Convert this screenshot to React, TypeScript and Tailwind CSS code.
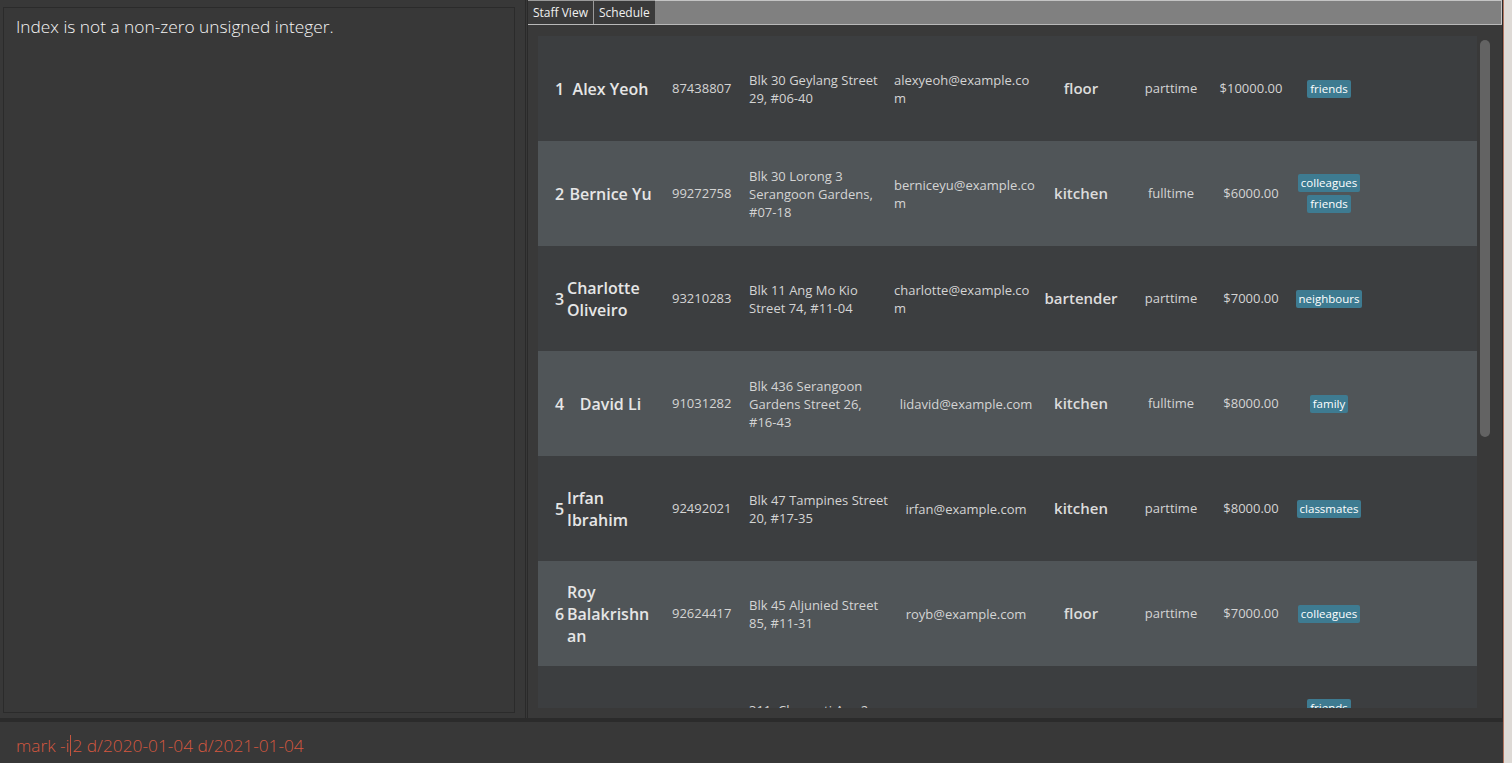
import React from "react"

interface Staff {
  name: string
  phone: string
  address: string
  email: string
  role: string
  type: string
  salary: string
  tags: string[]
}

const STAFF: Staff[] = [
  { name: "Alex Yeoh", phone: "87438807", address: "Blk 30 Geylang Street 29, #06-40", email: "alexyeoh@example.com", role: "floor", type: "parttime", salary: "$10000.00", tags: ["friends"] },
  { name: "Bernice Yu", phone: "99272758", address: "Blk 30 Lorong 3 Serangoon Gardens, #07-18", email: "berniceyu@example.com", role: "kitchen", type: "fulltime", salary: "$6000.00", tags: ["colleagues", "friends"] },
  { name: "Charlotte Oliveiro", phone: "93210283", address: "Blk 11 Ang Mo Kio Street 74, #11-04", email: "charlotte@example.com", role: "bartender", type: "parttime", salary: "$7000.00", tags: ["neighbours"] },
  { name: "David Li", phone: "91031282", address: "Blk 436 Serangoon Gardens Street 26, #16-43", email: "lidavid@example.com", role: "kitchen", type: "fulltime", salary: "$8000.00", tags: ["family"] },
  { name: "Irfan Ibrahim", phone: "92492021", address: "Blk 47 Tampines Street 20, #17-35", email: "irfan@example.com", role: "kitchen", type: "parttime", salary: "$8000.00", tags: ["classmates"] },
  { name: "Roy Balakrishnan", phone: "92624417", address: "Blk 45 Aljunied Street 85, #11-31", email: "royb@example.com", role: "floor", type: "parttime", salary: "$7000.00", tags: ["colleagues"] },
  { name: "Tan Kow", phone: "94351253", address: "311, Clementi Ave 2, #02-25", email: "tankow@example.com", role: "bartender", type: "fulltime", salary: "$5000.00", tags: ["friends", "owesMoney"] },
]

function StaffCard({ staff, index }: { staff: Staff; index: number }) {
  const bg = index % 2 === 0 ? "bg-[#3c3e40]" : "bg-[#505558]"
  return (
    <div className={`flex items-center min-h-[105px] pl-[17px] shrink-0 ${bg}`}>
      <div className="w-[12px] shrink-0 text-[16px] font-semibold text-[#e6e6e6]">{index + 1}</div>
      <div className="w-[87px] shrink-0 flex justify-center">
        <div className="min-w-0 text-[16px] leading-[22px] font-semibold text-[#e6e6e6] [overflow-wrap:anywhere]">{staff.name}</div>
      </div>
      <div className="w-[18px] shrink-0" />
      <div className="w-[77px] shrink-0 text-[13px] text-[#d4d4d4]">{staff.phone}</div>
      <div className="w-[141px] shrink-0 text-[13px] leading-[18px] text-[#d4d4d4]">{staff.address}</div>
      <div className="w-[4px] shrink-0" />
      <div className="w-[144px] shrink-0 flex justify-center">
        <div className="min-w-0 text-[13px] leading-[18px] text-[#d4d4d4] break-all">{staff.email}</div>
      </div>
      <div className="w-[86px] shrink-0 text-center text-[15px] font-semibold text-[#dcdcdc]">{staff.role}</div>
      <div className="w-[94px] shrink-0 text-center text-[13px] text-[#d4d4d4]">{staff.type}</div>
      <div className="w-[66px] shrink-0 text-center text-[13px] text-[#d4d4d4]">{staff.salary}</div>
      <div className="w-[90px] shrink-0 flex flex-col items-center gap-[3px]">
        {staff.tags.map((tag) => (
          <span key={tag} className="bg-[#3e7b91] text-white text-[11.5px] leading-[18px] px-[3px] rounded-[2px]">
            {tag}
          </span>
        ))}
      </div>
    </div>
  )
}

export default function App() {
  return (
    <div className="flex h-[763px] w-[1512px] overflow-hidden bg-[#383838] font-['Open_Sans',sans-serif]">
      <div className="flex flex-col w-[1503px] shrink-0">
        <div className="flex h-[718px] shrink-0 min-h-0">
          {/* result display */}
          <div className="w-[520px] shrink-0 pl-[3px] pt-[7px] pr-[5px] pb-[5px]">
            <div className="h-full border border-[#2b2b2b] pl-[12px] pt-[7px]">
              <p className="text-[17.3px] leading-[24px] font-light text-[#f4f4f4]">Index is not a non-zero unsigned integer.</p>
            </div>
          </div>
          <div className="w-[8px] shrink-0 flex justify-end">
            <div className="w-[3px] border-x border-[#2a2a2a]" />
          </div>

          {/* staff list */}
          <div className="flex-1 min-w-0 flex flex-col min-h-0 border-r border-[#2a2a2a]">
            <div className="h-[25px] shrink-0 flex border-b border-[#b9b9b9]">
              <div className="flex items-center px-[5px] text-[12px] text-[#f0f0f0] bg-[#3a3a3a] border-t border-[#9a9a9a]">Staff View</div>
              <div className="flex items-center px-[5px] text-[12px] text-[#f0f0f0] bg-[#3a3a3a] border-l border-t border-[#9a9a9a]">Schedule</div>
              <div className="flex-1 bg-[#808080] border-t border-r border-[#c4c4c4]" />
            </div>
            <div className="flex-1 min-h-0 flex pl-[10px] pt-[11px] pb-[10px] bg-[#393939]">
              <div className="w-[939px] shrink-0 flex flex-col overflow-hidden">
                {STAFF.map((s, i) => (
                  <StaffCard key={s.name} staff={s} index={i} />
                ))}
              </div>
              <div className="ml-[3px] mt-[4px] w-[10px] h-[397px] rounded-full bg-[#636363]" />
            </div>
          </div>
        </div>

        <div className="h-[4px] shrink-0 bg-[#2b2b2b]" />

        {/* command box */}
        <div className="flex-1 flex items-center pl-[16px] pt-[6px] text-[17.3px] font-light text-[#d4573f]">
          <span>mark -i</span>
          <span className="w-[1px] h-[21px] bg-[#c4553f] mx-[1px]" />
          <span>2 d/2020-01-04 d/2021-01-04</span>
        </div>
      </div>
      <div className="w-[1px] bg-[#b07460]" />
      <div className="flex-1 bg-[#dedad6]" />
    </div>
  )
}
